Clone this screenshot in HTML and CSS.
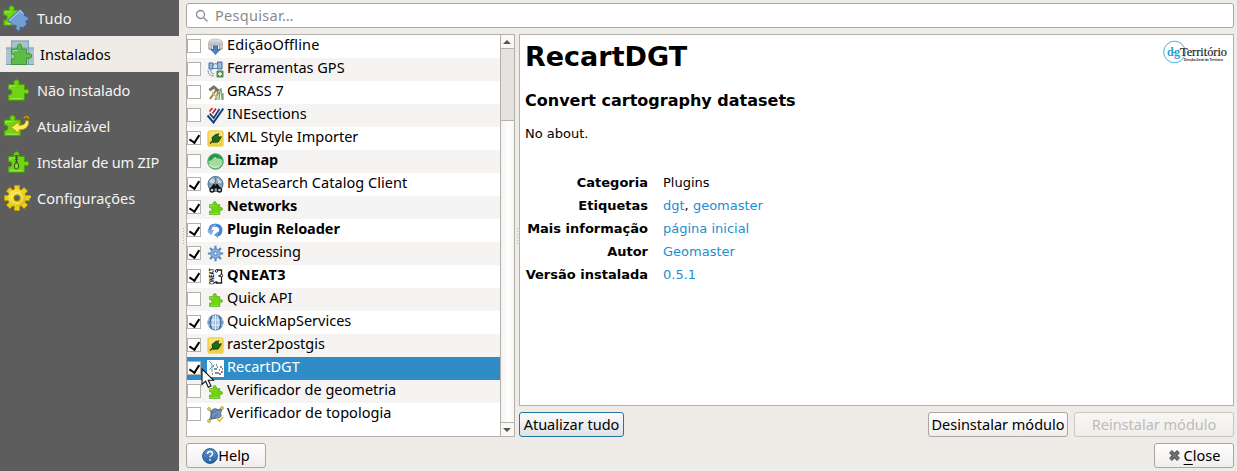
FILE: index.html
```
<!DOCTYPE html>
<html lang="pt">
<head>
<meta charset="utf-8">
<title>Módulos</title>
<link rel="stylesheet" href="styles.css">
</head>
<body>
<svg class="defs" width="0" height="0">
  <defs>
    <linearGradient id="blueBall" x1="0" y1="0" x2="0" y2="1"><stop offset="0" stop-color="#5f9ad2"/><stop offset="1" stop-color="#2560a0"/></linearGradient>
    <linearGradient id="gold" x1="0" y1="0" x2="1" y2="1"><stop offset="0" stop-color="#fff04a"/><stop offset="1" stop-color="#d9b400"/></linearGradient>
    <linearGradient id="silver" x1="0" y1="0" x2="0" y2="1"><stop offset="0" stop-color="#e4e4e4"/><stop offset="1" stop-color="#8b8d90"/></linearGradient>
    <symbol id="puzzle" viewBox="0 0 22 22">
      <path d="M.8 5.500H6.800C5.700 3.500 6.500 .8 9 .8s3.300 2.700 2.200 4.700H17v5.200c1.800-1 4.400-.4 4.400 1.800s-2.600 2.800-4.400 1.800V21.200H.8v-5.500c1.800.7 3.600-.4 3.600-2.500S2.600 10 .8 10.700z" fill="#6fd411" stroke="#47a00b" stroke-width=".9"/>
      <path d="M2.300 9.300V7h5.800M15 19.700H3" fill="none" stroke="#b5ef70" stroke-width=".8"/>
    </symbol>
    <symbol id="plug" viewBox="0 0 17 17">
      <rect x=".3" y=".3" width="16.400" height="16.400" rx="2.500" fill="#efd04a"/>
      <path d="M2 1.500h13v4L2 10z" fill="#f7e27b"/>
      <path d="M3 13.500l3.500-3M10 5.500l2-2M12.500 8l2-1.500" stroke="#25431c" stroke-width="1.500"/>
      <path d="M5 7.500l4.500-3.500 4 4.500-2.500 3.500-5 .2z" fill="#1c6b16" stroke="#184012"/>
    </symbol>
  </defs>
</svg>
<div class="window">
  <nav class="sidebar">
    <div class="nav-item"><svg class="nav-icon" viewBox="0 0 28 28"><use href="#puzzle" x="0" y="1" width="21" height="21"/><path d="M4.500 16.500L17.500 5l4 4.500q-1 2.500 1 2.800t2.500.7l.5 3-3 1.200 1.500 3-4 3.500q-3-1.500-3.200.6l.5 1.800-2.300 1.100-2.500-2.800 1-2.400-2.500-1.200-2 1-.5-2.500z" fill="#739fd0" stroke="#3766a5" stroke-width=".9"/><path d="M6 16.700L17.300 6.500l2.700 3" fill="none" stroke="#c5daf2"/></svg><span class="w-tudo">Tudo</span></div>
    <div class="nav-item active"><svg class="nav-icon" viewBox="0 0 28 28"><path d="M0 7.500h5V.5h18v7h5v17.500H0z" fill="#a9c3ca"/><path d="M0 8h28M5.500 1v24M22.500 1v24M0 24.500h28M5 1h18" stroke="#7c9fb3" fill="none"/><path d="M5.500 9h6.300c-1.200-2.500-.4-5 1.700-5s3 2.500 1.700 5h5.300v5c2-1 5.300-.5 5.300 2s-3.300 3-5.300 2v6.500H5.500v-5.500c4.500.5 4.500-5.500 0-5z" fill="#5bbd43" stroke="#3c8f32" stroke-width=".9"/><path d="M7 13v-2.500h5" stroke="#a8dca0" fill="none"/></svg><span>Instalados</span></div>
    <div class="nav-item"><svg class="nav-icon" viewBox="0 0 28 28"><use href="#puzzle" x="4.500" y="3" width="22" height="22"/></svg><span class="w-nao">Não instalado</span></div>
    <div class="nav-item"><svg class="nav-icon" viewBox="0 0 28 28"><use href="#puzzle" x="0.500" y="2.500" width="22" height="22"/><path d="M8 15.500l8-6v3.700q7 .3 6.500-4.700l3.500.5q0 9-10 9v3.500z" fill="#ffe95c" stroke="#a98206" stroke-width=".8"/><path d="M21 6.500q1-3 4-1.500l.5 2" fill="none" stroke="#c49800" stroke-width="1.500"/></svg><span>Atualizável</span></div>
    <div class="nav-item"><svg class="nav-icon" viewBox="0 0 28 28"><use href="#puzzle" x="4.500" y="3" width="22" height="22"/><path d="M13.500 7v9" stroke="#2e5b10" stroke-width="3" stroke-dasharray="1 1"/><path d="M13.500 7v9" stroke="#454b3c" stroke-width="1.200"/><rect x="11.500" y="15" width="4" height="6" rx="2" fill="#8bd64b" stroke="#34511d"/></svg><span class="w-zip">Instalar de um ZIP</span></div>
    <div class="nav-item"><svg class="nav-icon" viewBox="0 0 28 28"><g fill="none" stroke="#a88900" stroke-width="6"><path d="M14 1v26M1 14h26M4.800 4.800l18.400 18.400M23.200 4.800L4.800 23.200"/></g><g fill="none" stroke="url(#gold)"><path d="M14 1.700v24.600M5.300 5.300l17.400 17.400M22.700 5.300L5.300 22.700" stroke="#ecd021" stroke-width="4.600"/><path d="M1.700 14h24.600v.01" stroke="#ecd021" stroke-width="4.600"/></g><circle cx="14" cy="14" r="9" fill="url(#gold)"/><circle cx="14" cy="14" r="5.500" fill="none" stroke="#f8ef9a"/><circle cx="14" cy="14" r="3" fill="#5c5c5c" stroke="#a48305"/></svg><span>Configurações</span></div>
  </nav>
  <main class="main">
    <div class="search"><svg width="14" height="14" viewBox="0 0 14 14" fill="none" stroke="#8b8b8b" stroke-width="1.300"><circle cx="5.500" cy="5.500" r="4"/><path d="M8.500 8.500l4 4"/></svg><span>Pesquisar…</span></div>
    <div class="columns">
      <div class="splitter"></div>
      <section class="list">
        <div class="rows">
          <div class="row"><i class="check"></i><svg class="icon" viewBox="0 0 17 17"><path d="M1.500 5q0-4 7-4t7 4v6q-7 4-14 0z" fill="url(#silver)" stroke="#aaa" stroke-width=".6"/><path d="M3 7.500v3M5.500 8v3.500M11.500 8v3.500M14 7.500v3" stroke="#eee"/><path d="M6.500 8h4v3.500H13l-4.500 5-4.500-5h2.500z" fill="#4b83c4" stroke="#2c5794" stroke-width=".7"/></svg><span class="wide">EdiçãoOffline</span></div>
          <div class="row"><i class="check"></i><svg class="icon" viewBox="0 0 17 17"><path d="M2 2h4v6H2zM10.500 1h4.500v7h-4.500z" fill="#98b9dc" stroke="#416b9c"/><path d="M6 3.500q3-2 4.500 0v4H6z" fill="#dbe6f2" stroke="#6483a8"/><path d="M1 9q0 6 6 6M3.500 9q0 3.500 3.500 4" stroke="#8295aa" fill="none"/><rect x="9.500" y="9.500" width="7" height="7" rx="1" fill="#528b55"/><path d="M13 11v4M11 13h4" stroke="#fff" stroke-width="1.300"/></svg><span>Ferramentas GPS</span></div>
          <div class="row"><i class="check"></i><svg class="icon" viewBox="0 0 17 17"><path d="M9 16L11 5M12 16l1-11M15 16L14 4M8 16l4-8M16 16V9" stroke="#78a868" stroke-width="1.300"/><path d="M3 15l7-10" stroke="#a87e36" stroke-width="2"/><path d="M2 5l5-3.500 5 4.500-2 1.500-3-3-4 2.500z" fill="#777" stroke="#444" stroke-width=".5"/><path d="M5 8l6 7" stroke="#c8bd7a" stroke-width="1.500"/></svg><span>GRASS 7</span></div>
          <div class="row"><i class="check"></i><svg class="icon" viewBox="0 0 17 17" fill="none" stroke="#153f78"><path d="M.5 8.500L6.500 15.500 16.300 1.500" stroke-width="2"/><path d="M2.800 6.500L6.700 11 12.500 2" stroke-width="1.700"/><path d="M2.500 4.500L5.500 1M5.500 6.500L9 1.500" stroke="#c52028" stroke-width="1.600"/></svg><span>INEsections</span></div>
          <div class="row"><i class="check on"></i><svg class="icon"><use href="#plug"/></svg><span>KML Style Importer</span></div>
          <div class="row"><i class="check"></i><svg class="icon" viewBox="0 0 17 17"><circle cx="8.500" cy="8.500" r="7.700" fill="#a6d99a" stroke="#25984f" stroke-width="1"/><path d="M1.500 8Q2 1.500 8 1q7 .5 8 7-2-3-4-2.500T8.500 4Q7 3.500 6 5.500T1.500 8z" fill="#25984f"/><path d="M2.500 12q5 4 9 1" stroke="#d3edc6" fill="none" stroke-width="1.200"/></svg><span class="bold">Lizmap</span></div>
          <div class="row"><i class="check on"></i><svg class="icon" viewBox="0 0 17 17"><circle cx="8.500" cy="8" r="7.500" fill="#8ba8c2" stroke="#476680"/><path d="M2 5l4-3 2 3-3 4zM10 2l5 4-3 3z" fill="#cad6df"/><path d="M2 8h13M8.500 1v9" stroke="#456681" stroke-width=".6"/><path d="M4 12l2.500-3.500h1l.5 2h1l.5-2h1L13 12z" fill="#111" stroke="#111"/><circle cx="5" cy="14" r="2" fill="#c8d0d8" stroke="#111" stroke-width="1.300"/><circle cx="12.500" cy="14" r="2" fill="#c8d0d8" stroke="#111" stroke-width="1.300"/></svg><span class="wide-s">MetaSearch Catalog Client</span></div>
          <div class="row"><i class="check on"></i><svg class="icon"><use href="#puzzle" x="2" y="2" width="14" height="14"/></svg><span class="bold">Networks</span></div>
          <div class="row"><i class="check on"></i><svg class="icon" viewBox="0 0 17 17"><path d="M3 10.500Q2 3 8.500 3q5.500.5 5.300 5.500-.3 3.500-3.300 4.500" stroke="#4385d6" stroke-width="3.200" fill="none"/><path d="M3 7.500q1-4 6-4.500" stroke="#9bc3ef" fill="none"/><path d="M0 8.500l7-.5-3 5.500z" fill="#86b0e4"/><path d="M7 13l4-3.500v6.500z" fill="#629bdc"/></svg><span class="bold">Plugin Reloader</span></div>
          <div class="row"><i class="check on"></i><svg class="icon" viewBox="0 0 17 17"><g stroke="#568ac1" stroke-width="2.200"><path d="M8.500.8v15.400M.8 8.500h15.400M3 3l11 11M14 3L3 14"/></g><circle cx="8.500" cy="8.500" r="4.700" fill="#8db5df" stroke="#568ac1"/><circle cx="8.500" cy="8.500" r="1.800" fill="#f5f4f2" stroke="#4675aa"/></svg><span>Processing</span></div>
          <div class="row"><i class="check on"></i><svg class="icon" viewBox="0 0 17 17"><text class="qneat" transform="translate(7 16.500) rotate(-90)" textLength="16" lengthAdjust="spacingAndGlyphs">QNEAT</text><path d="M9 2h5.500v5l-3 1h3v7H9.500" stroke="#222" stroke-width="1.300" fill="none"/><circle cx="9.500" cy="3" r="1.200" fill="#fff" stroke="#222"/><circle cx="14.500" cy="7.500" r="1.200" fill="#fff" stroke="#222"/><circle cx="9.500" cy="14.500" r="1.200" fill="#222"/></svg><span class="bold wider">QNEAT3</span></div>
          <div class="row"><i class="check"></i><svg class="icon"><use href="#puzzle" x="2" y="2" width="14" height="14"/></svg><span>Quick API</span></div>
          <div class="row"><i class="check on"></i><svg class="icon" viewBox="0 0 17 17"><circle cx="8.500" cy="8.500" r="7.600" fill="#9dbada" stroke="#587da7"/><path d="M6 2v13M11 2v13M1 6h15M1 11h15M8.500 1v15" stroke="#e2edf8"/><path d="M5 2q-4 6.500 0 13M12 2q4 6.500 0 13" stroke="#3970a9" stroke-width="1.500" fill="none"/></svg><span>QuickMapServices</span></div>
          <div class="row"><i class="check on"></i><svg class="icon"><use href="#plug"/></svg><span>raster2postgis</span></div>
          <div class="row selected"><i class="check on"></i><svg class="icon" viewBox="0 0 17 17"><path d="M0 0h17v17H0z" fill="#fff"/><path d="M2 1l3 3v3l-3 3M5 6v6" stroke="#46aad0" fill="none"/><path d="M6 6h1M9 5h1M13 7h2M7 9h3M12 10h1M14 12h2M8 13h4M5 14h1M12 14h2M10 7h1M15 9h1" stroke="#181818" stroke-width="1.200"/></svg><span>RecartDGT</span></div>
          <div class="row"><i class="check"></i><svg class="icon"><use href="#puzzle" x="2" y="2" width="14" height="14"/></svg><span>Verificador de geometria</span></div>
          <div class="row"><i class="check"></i><svg class="icon" viewBox="0 0 17 17"><path d="M4 5q4-4 7-1l4-1.500-1.500 5q2 4-3.500 4.500l-6 1z" fill="#6e92bd" stroke="#46698f"/><path d="M2 3l3 4-3 8M5 7l10-5M2 15l9-7" stroke="#566b80" fill="none" stroke-width=".9"/><g fill="#f2da5c" stroke="#9a812a" stroke-width=".6"><circle cx="2" cy="3" r="1.500"/><circle cx="15" cy="2" r="1.500"/><circle cx="2" cy="15" r="1.500"/></g><path d="M10 12l2.500 3 3.500-4" stroke="#dcbf3e" stroke-width="1.800" fill="none"/></svg><span class="wide-s">Verificador de topologia</span></div>
        </div>
        <div class="scrollbar"><div class="arrow up"></div><div class="track"></div><div class="thumb"></div><div class="arrow down"></div></div>
      </section>
      <div class="splitter inner"></div>
      <section class="right">
        <article class="details">
          <svg class="logo" width="66" height="26" viewBox="0 0 66 26"><circle cx="11.500" cy="12" r="10.800" fill="none" stroke="#35a8d5" stroke-width=".9"/><text class="logo-blue" x="4" y="16" textLength="13">d-g</text><text class="logo-name" x="17" y="16" textLength="47" lengthAdjust="spacingAndGlyphs">Território</text><text class="logo-sub" x="21" y="21" textLength="39" lengthAdjust="spacingAndGlyphs">Direção-Geral do Território</text></svg>
          <h1>RecartDGT</h1>
          <h3>Convert cartography datasets</h3>
          <p>No about.</p>
          <dl>
            <dt>Categoria</dt><dd>Plugins</dd>
            <dt>Etiquetas</dt><dd><a>dgt</a>, <a>geomaster</a></dd>
            <dt>Mais informação</dt><dd><a>página inicial</a></dd>
            <dt>Autor</dt><dd><a>Geomaster</a></dd>
            <dt>Versão instalada</dt><dd><a>0.5.1</a></dd>
          </dl>
        </article>
        <div class="actions">
          <button class="btn focus update"><span>Atualizar tudo</span></button>
          <button class="btn uninstall"><span>Desinstalar módulo</span></button>
          <button class="btn reinstall" disabled><span>Reinstalar módulo</span></button>
        </div>
      </section>
    </div>
    <footer class="footer">
      <button class="btn small"><svg width="16" height="16" viewBox="0 0 16 16"><circle cx="8" cy="8" r="7.400" fill="url(#blueBall)" stroke="#24558d"/><path d="M5.500 6q0-2.500 2.500-2.500t2.500 2.200Q10.500 7 9 7.800q-1 .6-1 1.700M8 11v1.700" fill="none" stroke="#fff" stroke-width="1.400"/></svg><span>Help</span></button>
      <button class="btn small"><svg class="cross" width="13" height="13" viewBox="0 0 13 13"><path d="M2.500 2.500l8 8M10.500 2.500l-8 8" stroke="#505050" stroke-width="4"/><path d="M2.500 2.500l8 8M10.500 2.500l-8 8" stroke="#747474" stroke-width="2"/></svg><span><u>C</u>lose</span></button>
    </footer>
  </main>
  <svg class="cursor" width="14" height="21" viewBox="0 0 14 21"><path d="M1 1v15.500l3.600-3.300 2.700 6 2.700-1.300-2.700-5.700h5.200z" fill="#fff" stroke="#111" stroke-width="1.100"/></svg>
</div>
</body>
</html>
```
FILE: styles.css
```
* { box-sizing: border-box; }
body { margin: 0; font: 14.5px/20px "Noto Sans", "Open Sans", sans-serif; color: #000; overflow: hidden; }
.defs { position: absolute; }
.window { position: relative; display: flex; width: 1237px; height: 471px; background: #efebe7; }
span { white-space: nowrap; }

.sidebar { width: 179px; background: #5d5d5d; color: #f4f4f4; flex: none; }
.nav-item { display: flex; align-items: center; gap: 6px; height: 36px; padding-left: 3px; }
.nav-item.active { background: #efebe7; color: #000; padding-left: 6px; }
.nav-icon { width: 28px; height: 28px; flex: none; }
.w-tudo { letter-spacing: .2px; }
.w-nao { letter-spacing: -.08px; }
.w-zip { letter-spacing: -.16px; }

.main { flex: 1; display: flex; flex-direction: column; padding: 3px 3px 3px 0; }
.search { display: flex; align-items: center; gap: 6px; height: 25px; margin: 0 0 6px 7px; padding-left: 8px; border: 1px solid #aaa6a1; border-radius: 3px; background: #fff; color: #8a8a8a; }
.search span { padding-bottom: 2px; letter-spacing: .3px; }
.columns { display: flex; height: 403px; }
.splitter { width: 7px; flex: none; background: radial-gradient(circle, #bbb7b2 .7px, transparent 1px) 3px 193px / 3px 3px; clip-path: inset(193px 1px 192px 3px); }
.splitter.inner { width: 4px; clip-path: inset(193px 0 192px 1px); background-position: 1px 193px; }

.list { display: flex; width: 329px; flex: none; border: 1px solid #b4b0ac; background: #fff; }
.rows { flex: 1; }
.row { display: flex; height: 23px; align-items: flex-start; line-height: 19px; }
.row:nth-child(even) { background: #f5f4f2; }
.row.selected { background: #308cc6; color: #fff; }
.check { width: 14px; height: 14px; margin: 4px 6px 0 0; border: 1px solid #b4b0ac; background: #fff; flex: none; display: flex; justify-content: center; }
.check.on::after { content: ""; width: 5px; height: 8px; margin: 1px 0 0 1px; border: solid #000; border-width: 0 2px 2px 0; transform: rotate(33deg); }
.icon { width: 17px; height: 17px; margin: 3px 3px 0 0; flex: none; }
.bold { font-weight: bold; letter-spacing: -.08px; }
.wide { letter-spacing: .15px; }
.wide-s { letter-spacing: .04px; }
.wider { letter-spacing: .3px; }
.qneat { font: bold 7px "Liberation Sans", sans-serif; }

.scrollbar { display: flex; flex-direction: column; width: 14px; border-left: 1px solid #b4b0ac; }
.arrow { height: 13px; background: #f9f8f7; display: flex; align-items: center; justify-content: center; padding-right: 1px; }
.arrow::after { content: ""; border: 4px solid transparent; }
.up::after { border-bottom-color: #555; border-top: 0; }
.down::after { border-top-color: #555; border-bottom: 0; }
.track { height: 72px; background: #e4e3e0; border-top: 1px solid #b4b0ac; }
.thumb { flex: 1; border: solid #b4b0ac; border-width: 1px 0; background: linear-gradient(90deg, #f4f3f2, #fff 60%, #f7f6f5); }

.right { flex: 1; display: flex; flex-direction: column; }
.details { position: relative; height: 372px; padding: 0 5px; border: 1px solid #b4b0ac; background: #fff; font: 13px/23px "DejaVu Sans", sans-serif; }
h1 { margin: 6px 0 0; font-size: 27px; line-height: 32px; }
h3 { margin: 16px 0 0; font-size: 16px; line-height: 24px; }
p { margin: 9px 0 0; }
dl { display: grid; grid-template-columns: 123px 1fr; column-gap: 15px; margin: 26px 0 0; }
dt { font-weight: bold; text-align: right; white-space: nowrap; }
dd { margin: 0; }
a { color: #1a8fd0; }
.logo { position: absolute; right: 4px; top: 5px; }
.logo-blue { font: bold 12px "Liberation Serif", serif; fill: #2d9fd0; }
.logo-name { font: 13px "Liberation Serif", serif; fill: #222; stroke: #222; stroke-width: .2; }
.logo-sub { font: bold 4px "Liberation Sans", sans-serif; fill: #222; }

.actions { display: flex; margin-top: 6px; }
.btn { display: flex; align-items: center; justify-content: center; height: 25px; padding: 0; border: 1px solid #aaa6a1; border-radius: 3px; background: linear-gradient(#fefefe, #f0eeec); font: inherit; color: #000; }
.btn span { padding-bottom: 2px; }
.focus { border-color: #2874a0; background: linear-gradient(#fafbfc, #dfe3e6); }
.btn:disabled { color: #bdbbb9; border-color: #cac6c2; background: linear-gradient(#f8f7f6, #f0eeeb); }
.update { width: 105px; margin-right: auto; }
.uninstall { width: 140px; }
.reinstall { width: 160px; margin-left: 6px; }
.footer { display: flex; justify-content: space-between; margin: 6px 0 0 7px; }
.small { width: 80px; }
.cross { margin-right: 3px; }
u { text-decoration-thickness: 1px; text-underline-offset: 3px; }
.cursor { position: absolute; left: 201px; top: 368px; }
```
